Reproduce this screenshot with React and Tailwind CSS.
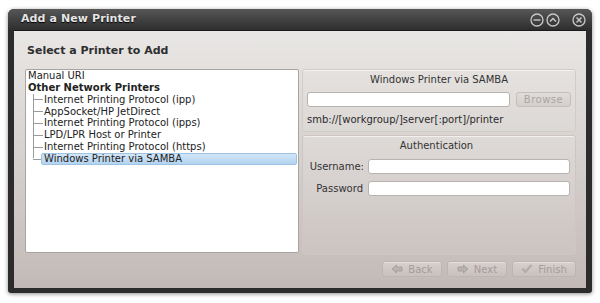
import React from "react";

function CircleIcon({ children }) {
  return (
    <svg width="14" height="14" viewBox="0 0 14 14">
      <circle cx="7" cy="7" r="6" fill="none" stroke="#c8c8c8" strokeWidth="1.3" />
      {children}
    </svg>
  );
}

function Btn({ icon, label, w }) {
  return (
    <div
      className={`${w} h-[16px] flex items-center justify-center gap-[5px] rounded-[3px] border border-[#bdb5b2] bg-gradient-to-b from-[#d6d0ce] to-[#c9c1be] text-[#a39c99] text-[10px] shadow-[inset_0_1px_0_rgba(255,255,255,0.35)]`}
    >
      {icon}
      <span>{label}</span>
    </div>
  );
}

export default function App() {
  const items = [
    "Internet Printing Protocol (ipp)",
    "AppSocket/HP JetDirect",
    "Internet Printing Protocol (ipps)",
    "LPD/LPR Host or Printer",
    "Internet Printing Protocol (https)",
  ];
  return (
    <div
      className="w-[600px] h-[303px] bg-white pt-[9px] pl-[8px]"
      style={{ fontFamily: '"DejaVu Sans", sans-serif' }}
    >
      <div className="w-[584px] h-[284px] rounded-t-[6px] rounded-b-[3px] bg-[#2c2c2c] flex flex-col shadow-[0_1px_4px_rgba(0,0,0,0.45)]">
        {/* title bar */}
        <div className="h-[21px] flex items-center justify-between pl-[13px] pr-[6px] rounded-t-[6px] bg-gradient-to-b from-[#575757] to-[#2e2e2e]">
          <span className="text-[11px] font-bold text-[#e6e6e6] [text-shadow:0_1px_1px_#000] tracking-[0.1px]">
            Add a New Printer
          </span>
          <div className="flex items-center gap-[2px] pt-[1px]">
            <CircleIcon>
              <line x1="3.5" y1="7" x2="10.5" y2="7" stroke="#c8c8c8" strokeWidth="1.4" />
            </CircleIcon>
            <CircleIcon>
              <polyline points="4,8.5 7,5.5 10,8.5" fill="none" stroke="#c8c8c8" strokeWidth="1.5" />
            </CircleIcon>
            <div className="w-[8px]" />
            <CircleIcon>
              <line x1="4.5" y1="4.5" x2="9.5" y2="9.5" stroke="#c8c8c8" strokeWidth="1.4" />
              <line x1="9.5" y1="4.5" x2="4.5" y2="9.5" stroke="#c8c8c8" strokeWidth="1.4" />
            </CircleIcon>
          </div>
        </div>
        {/* content */}
        <div className="mx-[6px] mb-[5px] flex-1 flex flex-col bg-gradient-to-b from-[#e9e7e5] to-[#c3bab7] border-t border-[#1a1a1a]">
          <div className="pl-[13px] pt-[12px] h-[38px] text-[11px] font-bold text-[#2e2e2e]">
            Select a Printer to Add
          </div>
          <div className="flex pl-[11px] gap-[3px]">
            {/* tree */}
            <div className="w-[274px] h-[184px] bg-white border border-[#a8a4a2] rounded-[2px] pt-[0px] text-[10px] text-[#222] leading-[11.86px]">
              <div className="pl-[2px]">Manual URI</div>
              <div className="pl-[2px] font-bold">Other Network Printers</div>
              <div className="relative">
                <div className="absolute left-[7px] top-0 w-px h-[64px] bg-[#9a9a9a]" />
                {items.map((t) => (
                  <div key={t} className="flex items-center h-[11.86px]">
                    <div className="ml-[7px] w-[10px] h-px bg-[#9a9a9a]" />
                    <span className="ml-[1px]">{t}</span>
                  </div>
                ))}
                <div className="flex items-center h-[12px]">
                  <div className="ml-[7px] w-[8px] h-px bg-[#9a9a9a]" />
                  <div className="flex-1 mr-[1px] h-[12px] flex items-center pl-[2px] rounded-[2px] border border-[#9cc2e4] bg-gradient-to-b from-[#d3e6f7] to-[#b3d3ef]">
                    Windows Printer via SAMBA
                  </div>
                </div>
              </div>
            </div>
            {/* right */}
            <div className="w-[274px] flex flex-col gap-[3px]">
              <div className="h-[63px] rounded-[3px] border border-[#d2ccc9] bg-gradient-to-b from-[#e4e1df] to-[#dcd8d6] shadow-[inset_0_1px_0_rgba(255,255,255,0.6)] px-[4px] text-[10px] text-[#333]">
                <div className="text-center pt-[2px] h-[22px]">Windows Printer via SAMBA</div>
                <div className="flex gap-[6px]">
                  <div className="w-[203px] h-[15px] bg-white border border-[#b9b3b0] rounded-[3px]" />
                  <div className="w-[55px] h-[15px] rounded-[3px] border border-[#c5bfbc] bg-gradient-to-b from-[#e0dcda] to-[#d4cfcc] text-[#aaa5a2] flex items-center justify-center tracking-[0.5px]">
                    Browse
                  </div>
                </div>
                <div className="pt-[5px] pl-[0px] text-[#2a2a2a]">smb://[workgroup/]server[:port]/printer</div>
              </div>
              <div className="h-[120px] rounded-[3px] border border-[#cdc6c3] bg-gradient-to-b from-[#dedad8] to-[#cbc4c1] shadow-[inset_0_1px_0_rgba(255,255,255,0.6)] pr-[5px] text-[10px] text-[#333]">
                <div className="text-center pt-[2px] h-[23px]">Authentication</div>
                <div className="flex items-center h-[15px]">
                  <div className="w-[61px] text-right">Username:</div>
                  <div className="ml-[4px] flex-1 h-[15px] bg-white border border-[#b9b3b0] rounded-[3px]" />
                </div>
                <div className="flex items-center h-[15px] mt-[7px]">
                  <div className="w-[60px] text-right">Password</div>
                  <div className="ml-[5px] flex-1 h-[15px] bg-white border border-[#b9b3b0] rounded-[3px]" />
                </div>
              </div>
            </div>
          </div>
          <div className="flex justify-end gap-[5px] pr-[10px] pt-[6px]">
            <Btn
              w="w-[60px]"
              label="Back"
              icon={
                <svg width="12" height="10" viewBox="0 0 12 10">
                  <path d="M1 5 L5.5 1 V3 H11 V7 H5.5 V9 Z" fill="#b9b2af" stroke="#a19a97" strokeWidth="0.8" />
                </svg>
              }
            />
            <Btn
              w="w-[60px]"
              label="Next"
              icon={
                <svg width="12" height="10" viewBox="0 0 12 10">
                  <path d="M11 5 L6.5 1 V3 H1 V7 H6.5 V9 Z" fill="#b9b2af" stroke="#a19a97" strokeWidth="0.8" />
                </svg>
              }
            />
            <Btn
              w="w-[64px]"
              label="Finish"
              icon={
                <svg width="12" height="10" viewBox="0 0 12 10">
                  <path d="M1 5.5 L4.5 9 L11 1.5 L9.5 1 L4.5 6.5 L2.5 4.5 Z" fill="#b9b2af" stroke="#a19a97" strokeWidth="0.6" />
                </svg>
              }
            />
          </div>
        </div>
      </div>
    </div>
  );
}
